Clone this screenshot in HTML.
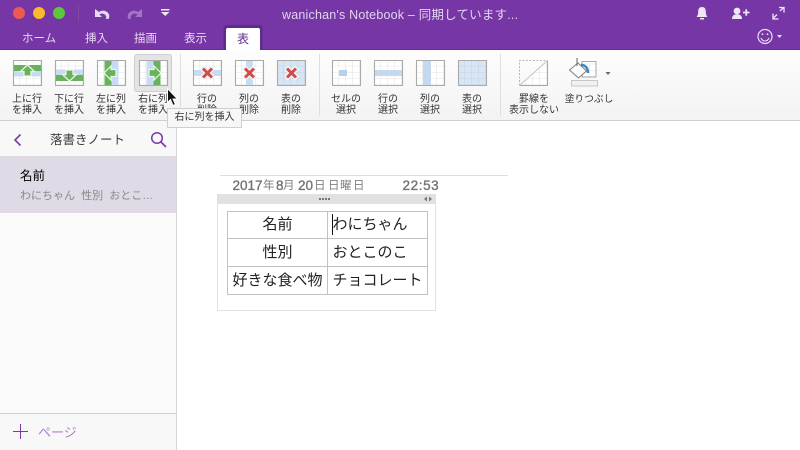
<!DOCTYPE html>
<html lang="ja"><head><meta charset="utf-8"><title>OneNote</title>
<style>
html,body{margin:0;padding:0;width:800px;height:450px;overflow:hidden;background:#fff}
body{position:relative;font-family:"Liberation Sans","Noto Sans CJK JP",sans-serif;color:#333}
.a{position:absolute;white-space:nowrap}
.tab{position:absolute;top:31px;font-size:11.5px;line-height:16px;color:#e6d6f0;white-space:nowrap}
.l{position:absolute;width:60px;text-align:center;font-size:10px;line-height:10.500px;color:#333;white-space:nowrap}
.d{position:absolute;top:178px;font-size:13.500px;line-height:16px;color:#737373;white-space:nowrap;-webkit-text-stroke:.35px #737373}
.k{position:absolute;top:178px;font-size:11.500px;line-height:16px;color:#808080;white-space:nowrap}
td{border:1px solid #c2c2c2;padding:0;font-size:15px;line-height:20px;color:#222;white-space:nowrap}
</style></head><body>
<div class="a" style="left:0;top:0;width:800px;height:50px;background:#7636a5"></div>
<div class="a" style="left:0;top:49px;width:800px;height:1px;background:#63308a"></div>
<svg class="a" style="left:0;top:0" width="800" height="50" viewBox="0 0 800 50">
<circle cx="19" cy="13" r="6" fill="#ee5a52"/><circle cx="39" cy="13" r="6" fill="#fcb92d"/><circle cx="59" cy="13" r="6" fill="#5cc83b"/>
<rect x="78" y="5" width="1" height="17" fill="#84489f"/>
<path d="M95 9v8h7l-2.500-2.500c2-1.600 5-1 6.200 1 .9 1.500.6 2.800-.2 3.400h3.200c1-2 .8-4.500-.7-6-2.300-2.700-6.200-3-9-.9z" fill="#e8d9f1"/>
<path d="M142 9v8h-7l2.500-2.500c-2-1.600-5-1-6.200 1-.9 1.500-.6 2.800.2 3.400h-3.200c-1-2-.8-4.500.7-6 2.300-2.700 6.200-3 9-.9z" fill="#a275c4"/>
<rect x="161" y="9" width="8.500" height="1.500" fill="#f0e6f5"/><path d="M161 12h8.500l-4.250 4z" fill="#f0e6f5"/>
<path d="M702 7c-2.800 0-3.800 2-3.800 4.500 0 2.800-.7 4.500-1.700 5.500h11c-1-1-1.700-2.700-1.700-5.500C705.800 9 704.800 7 702 7z" fill="#efe5f5"/><rect x="700" y="18" width="4" height="1.500" fill="#efe5f5"/>
<circle cx="737" cy="11" r="3.400" fill="#efe5f5"/><path d="M732 19c0-3.300 2-4.700 5-4.700s5 1.400 5 4.700z" fill="#efe5f5"/><path d="M743 12.500h6.500M746.250 9.250v6.500" stroke="#efe5f5" stroke-width="1.700"/>
<path d="M773 18.500l4-4M780 11l3.500-3.500M779 7.500h5v5M773 13.500v5.500h5.500" fill="none" stroke="#efe5f5" stroke-width="1.300"/>
<circle cx="765" cy="36.500" r="7" fill="none" stroke="#eadff2" stroke-width="1.200"/><circle cx="762.500" cy="34.200" r=".9" fill="#eadff2"/><circle cx="767.500" cy="34.200" r=".9" fill="#eadff2"/><path d="M761 38c1 2.400 2.800 3 4 3s3-.6 4-3" fill="none" stroke="#eadff2" stroke-width="1.100"/>
<path d="M777 35h5l-2.500 3z" fill="#eadff2"/>
<path d="M223.500 50V28q0-3 3-3h33q3 0 3 3v22z" fill="#5f2c8c"/><path d="M226 50V30q0-2 2-2h30q2 0 2 2v20z" fill="#fff"/>
</svg>
<div class="tab" style="left:22px">ホーム</div><div class="tab" style="left:85px">挿入</div><div class="tab" style="left:134px">描画</div><div class="tab" style="left:184px">表示</div>
<div class="tab" style="left:237px;color:#63308f;font-size:12px">表</div>
<div class="a" style="left:282px;top:7px;font-size:12.500px;line-height:17px;color:#e3d4ee;letter-spacing:.2px">wanichan's Notebook – 同期しています...</div>

<div class="a" style="left:0;top:50px;width:800px;height:70px;background:linear-gradient(#fdfdfd,#f3f3f3)"></div>
<div class="a" style="left:0;top:120px;width:800px;height:1px;background:#cfcfcf"></div>
<div class="a" style="left:134px;top:54px;width:36px;height:36px;border:1px solid #cdcdcd;border-radius:3px;background:#e4e4e4"></div>
<div class="a" style="left:180px;top:54px;width:1px;height:62px;background:#dedede"></div>
<div class="a" style="left:319px;top:54px;width:1px;height:62px;background:#dedede"></div>
<div class="a" style="left:500px;top:54px;width:1px;height:62px;background:#dedede"></div>

<svg class="a" style="left:0;top:50px" width="640" height="50" viewBox="0 0 640 50">
<defs>
<pattern id="g" width="7" height="6.250" patternUnits="userSpaceOnUse"><rect width="7" height="6.250" fill="#fff"/><path d="M7 0V6.250M0 6.250H7" stroke="#e2e2e2" stroke-width="1"/></pattern>
<pattern id="gb" width="7" height="6.250" patternUnits="userSpaceOnUse"><rect width="7" height="6.250" fill="#d8e5f3"/><path d="M7 0V6.250M0 6.250H7" stroke="#c2d3e4" stroke-width="1"/></pattern>
<g id="base"><rect x=".5" y=".5" width="28" height="25" fill="url(#g)"/></g>
<path id="frame" d="M.5.500h28v25h-28z" fill="none" stroke="#aaa" stroke-width="1.100"/>
<g id="x"><path d="M-5.500-5.500L5.500 5.500M5.500-5.500L-5.500 5.500" stroke="#f4f4f4" stroke-width="5.500"/><path d="M-4.500-4.500L4.500 4.500M4.500-4.500L-4.500 4.500" stroke="#cd4d4d" stroke-width="3"/></g>
</defs>
<g transform="translate(13,10)"><use href="#base"/><rect y="11" width="29" height="5.500" fill="#c7dcf3"/><rect y="5" width="29" height="6" fill="#66b35a"/><path d="M7.500 11.500l7-6.500 7 6.500h-3.500v4.500h-7v-4.500z" fill="#66b35a" stroke="#eef6ea" stroke-width="1.200"/><use href="#frame"/></g>
<g transform="translate(55,10)"><use href="#base"/><rect y="9.500" width="29" height="5.500" fill="#c7dcf3"/><rect y="15" width="29" height="6" fill="#66b35a"/><path d="M7.500 14.500l7 6.500 7-6.500h-3.500v-4.500h-7v4.500z" fill="#66b35a" stroke="#eef6ea" stroke-width="1.200"/><use href="#frame"/></g>
<g transform="translate(97,10)"><use href="#base"/><rect x="14.500" width="7" height="26" fill="#c7dcf3"/><rect x="7.500" width="7" height="26" fill="#66b35a"/><path d="M14 6l-7 7 7 7v-3.500h5v-7h-5z" fill="#66b35a" stroke="#eef6ea" stroke-width="1.200"/><use href="#frame"/></g>
<g transform="translate(139,10)"><use href="#base"/><rect x="7.500" width="7" height="26" fill="#c7dcf3"/><rect x="14.500" width="7" height="26" fill="#66b35a"/><path d="M15 6l7 7-7 7v-3.500h-5v-7h5z" fill="#66b35a" stroke="#eef6ea" stroke-width="1.200"/><use href="#frame"/></g>
<g transform="translate(193,10)"><use href="#base"/><rect y="10" width="29" height="6" fill="#c7dcf3"/><use href="#x" x="14.500" y="13"/><use href="#frame"/></g>
<g transform="translate(235,10)"><use href="#base"/><rect x="11" width="7" height="26" fill="#c7dcf3"/><use href="#x" x="14.500" y="13"/><use href="#frame"/></g>
<g transform="translate(277,10)"><rect x=".5" y=".5" width="28" height="25" fill="url(#gb)"/><use href="#x" x="14.500" y="13"/><use href="#frame"/></g>
<g transform="translate(332,10)"><use href="#base"/><rect x="7" y="10" width="8" height="6" fill="#b8d1ea"/><use href="#frame"/></g>
<g transform="translate(374,10)"><use href="#base"/><rect y="10" width="29" height="6" fill="#c5d9ee"/><use href="#frame"/></g>
<g transform="translate(416,10)"><use href="#base"/><rect x="7" width="8" height="26" fill="#c5d9ee"/><use href="#frame"/></g>
<g transform="translate(458,10)"><rect x=".5" y=".5" width="28" height="25" fill="url(#gb)"/><use href="#frame"/></g>
<g transform="translate(519,10)"><path d="M.5 25.500L28.500.5v25z" fill="url(#g)"/><path d="M.5 25.500V.5h28" fill="none" stroke="#b5b5b5" stroke-dasharray="2 1.500"/><path d="M.5 25.500h28V.5" fill="none" stroke="#a8a8a8" stroke-width="1.100"/><path d="M.5 25.500L28.500.5" stroke="#c4c4c4"/></g>
<g transform="translate(569,8)"><rect x="13" y="3.500" width="14" height="15.500" fill="url(#g)" stroke="#a8a8a8"/><path d="M.5 12L9 5l8.500 8L9.500 20z" fill="#fff" stroke="#7c7c7c"/><path d="M8 0v8" stroke="#666" stroke-width="1"/><path d="M12 7c4.500 0 7 3 7 8" fill="none" stroke="#3d86c0" stroke-width="2.500"/><rect x="2.500" y="22.500" width="26" height="5.500" fill="#f1f1f1" stroke="#c8c8c8"/></g>
<path d="M605.500 22h5l-2.500 3z" fill="#666"/>
</svg>

<div class="l" style="left:-3px;top:95px">上に行<br>を挿入</div>
<div class="l" style="left:39px;top:95px">下に行<br>を挿入</div>
<div class="l" style="left:81px;top:95px">左に列<br>を挿入</div>
<div class="l" style="left:123px;top:95px">右に列<br>を挿入</div>
<div class="l" style="left:177px;top:95px">行の<br>削除</div>
<div class="l" style="left:219px;top:95px">列の<br>削除</div>
<div class="l" style="left:261px;top:95px">表の<br>削除</div>
<div class="l" style="left:316px;top:95px">セルの<br>選択</div>
<div class="l" style="left:358px;top:95px">行の<br>選択</div>
<div class="l" style="left:400px;top:95px">列の<br>選択</div>
<div class="l" style="left:442px;top:95px">表の<br>選択</div>
<div class="l" style="left:504px;top:95px">罫線を<br>表示しない</div>
<div class="l" style="left:559px;top:95px;font-size:9.700px">塗りつぶし</div>

<div class="a" style="left:0;top:121px;width:176px;height:329px;background:#f8f8f8"></div>
<div class="a" style="left:176px;top:121px;width:1px;height:329px;background:#d6d6d6"></div>
<div class="a" style="left:0;top:156px;width:176px;height:1px;background:#dcdcdc"></div>
<div class="a" style="left:0;top:157px;width:176px;height:56px;background:#e0dae6"></div>
<div class="a" style="left:0;top:213px;width:176px;height:200px;background:#fbfbfb"></div>
<div class="a" style="left:0;top:413px;width:176px;height:1px;background:#cfcfcf"></div>
<svg class="a" style="left:0;top:121px" width="176" height="36" viewBox="0 0 176 36">
<path d="M20.500 13.500l-5.500 5.500 5.500 5.500" fill="none" stroke="#7a3aa8" stroke-width="1.600"/>
<circle cx="157" cy="17" r="5.300" fill="none" stroke="#7a3aa8" stroke-width="1.500"/><path d="M161 21l5 5" stroke="#7a3aa8" stroke-width="1.600"/>
</svg>
<div class="a" style="left:50px;top:131px;font-size:12.500px;line-height:18px;color:#3c3c3c">落書きノート</div>
<div class="a" style="left:20px;top:167px;font-size:12.500px;line-height:18px;color:#000">名前</div>
<div class="a" style="left:20px;top:188px;font-size:11px;line-height:16px;color:#888">わにちゃん&nbsp; 性別&nbsp; おとこ…</div>
<svg class="a" style="left:13px;top:424px" width="16" height="16"><path d="M0 7.500h15M7.500 0v15" stroke="#7a3aa8" stroke-width="1"/></svg>
<div class="a" style="left:38px;top:424px;font-size:13px;line-height:17px;color:#b07fd0">ページ</div>

<div class="a" style="left:220px;top:175px;width:288px;height:1px;background:#dedede"></div>
<div class="d" style="left:232.500px">2017</div><div class="k" style="left:263px">年</div><div class="d" style="left:276px">8</div><div class="k" style="left:283px">月</div><div class="d" style="left:298px">20</div><div class="k" style="left:314px">日</div><div class="k" style="left:328px">日</div><div class="k" style="left:340px">曜</div><div class="k" style="left:353px">日</div>
<div class="d" style="left:402.500px;letter-spacing:.6px">22:53</div>
<div class="a" style="left:217px;top:194px;width:217px;height:116px;border:1px solid #e0e0e0;border-top:none"></div>
<div class="a" style="left:217px;top:194px;width:219px;height:10px;background:#e1e1e1"></div>
<svg class="a" style="left:217px;top:194px" width="219" height="10">
<path d="M102 4h2v2h-2zM105 4h2v2h-2zM108 4h2v2h-2zM111 4h2v2h-2z" fill="#777"/>
<path d="M207 5l3-2.500v5zM212 2.500l3 2.500-3 2.500z" fill="#777"/>
</svg>
<table class="a" style="left:227px;top:211px;width:201px;height:84px;border-collapse:collapse;table-layout:fixed">
<tr style="height:27px"><td style="width:99px;text-align:center">名前</td><td style="padding-left:4.500px">わにちゃん</td></tr>
<tr style="height:28px"><td style="text-align:center">性別</td><td style="padding-left:4.500px">おとこのこ</td></tr>
<tr style="height:28px"><td style="text-align:center">好きな食べ物</td><td style="padding-left:4.500px">チョコレート</td></tr>
</table>
<div class="a" style="left:332px;top:214px;width:1px;height:21px;background:#111"></div>

<div class="a" style="left:167px;top:108px;width:73px;height:18px;background:#f7f7f7;border:1px solid #cfcfcf;font-size:10px;line-height:18px;text-align:center;color:#333">右に列を挿入</div>
<svg class="a" style="left:165px;top:87px" width="16" height="21"><path d="M2.500 1.500v14l3-3 2.500 6 2.500-1-2.500-5.500h4.500z" fill="#111" stroke="#fff" stroke-width="1"/></svg>
</body></html>
